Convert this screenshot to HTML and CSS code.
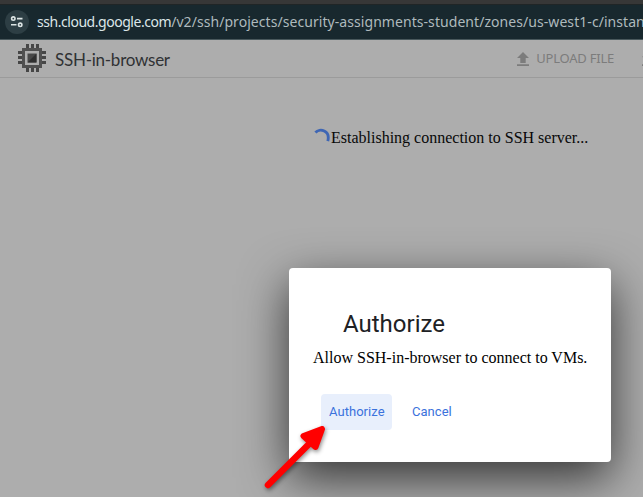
FILE: index.html
```html
<!DOCTYPE html>
<html lang="en">
<head>
<meta charset="utf-8">
<title>SSH-in-browser</title>
<link rel="stylesheet" href="styles.css">
</head>
<body>
<div class="address-bar">
  <span class="site-info"><svg width="14" height="14" viewBox="0 0 14 14" fill="none" stroke="currentColor" stroke-width="1.6"><circle cx="3.3" cy="3.6" r="1.7"/><path d="M7 3.6h5.500M1 9.800h5.500"/><circle cx="10.2" cy="9.8" r="1.7"/></svg></span>
  <span class="url"><span class="host">ssh.cloud.google.com</span><span class="path">/v2/ssh/projects/security-assignments-student/zones/us-west1-c/instan</span></span>
</div>
<header class="toolbar">
  <svg class="chip" width="28" height="28" viewBox="0 0 28 28">
    <path fill="#464646" d="M8 0h3v4H8zM13 0h3v4h-3zM18 0h3v4h-3zM8 24h3v4H8zM13 24h3v4h-3zM18 24h3v4h-3zM0 7h4v3H0zM0 12h4v3H0zM0 17h4v3H0zM24 7h4v3h-4zM24 12h4v3h-4zM24 17h4v3h-4z"/>
    <path fill="#505050" fill-rule="evenodd" d="M4 4h20v20H4zM7 7v14h14V7z"/>
    <path fill="#484848" d="M9.500 9.500h9v9h-9z"/><path fill="#303030" d="M18.500 9.500v9h-9z"/>
  </svg>
  <h1 class="brand">SSH-in-browser</h1>
  <div class="upload"><svg width="12" height="14" viewBox="0 0 12 14"><path fill="currentColor" d="M6 0l6 6H8.700v5H3.300V6H0zM0 12.300h12V14H0z"/></svg><span>UPLOAD FILE</span></div>
  <svg class="download" width="12" height="14" viewBox="0 0 12 14"><path fill="currentColor" d="M6 10L0 4.500h3.300V0h5.400v4.500H12zM0 12.300h12V14H0z"/></svg>
</header>
<main class="terminal">
  <div class="status"><svg width="18" height="20" viewBox="0 0 18 20"><path d="M1.500 4.200C6-.8 17.500 2 14.600 13.200" fill="none" stroke="#3e66b4" stroke-width="3"/></svg><span>Establishing connection to SSH server...</span></div>
</main>
<section class="dialog" role="dialog">
  <h2>Authorize</h2>
  <p>Allow SSH-in-browser to connect to VMs.</p>
  <div class="actions"><button class="primary">Authorize</button><button>Cancel</button></div>
</section>
<svg class="pointer" width="76" height="76" viewBox="0 0 76 76"><path d="M12 68L55 25" stroke="#f00" stroke-width="6.500" stroke-linecap="round"/><path d="M66 12L59.500 30L47.500 19z" fill="#f00" stroke="#f00" stroke-width="6" stroke-linejoin="round"/></svg>
</body>
</html>
```
FILE: styles.css
```css
* { box-sizing: border-box; }
body { margin: 0; width: 643px; height: 497px; overflow: hidden; position: relative; background: #adadad; font-family: "Liberation Serif", serif; }
.address-bar { height: 40px; display: flex; align-items: center; padding: 4px 0 0 5px; border-top: 4px solid #373737; border-bottom: 1px solid #49585c; background: #18282e; box-shadow: inset 0 1px #202526; }
.site-info { width: 24px; height: 24px; flex: none; border-radius: 50%; background: #2d3e44; color: #dce4e4; display: flex; align-items: center; justify-content: center; margin-top: -3px; }
.url { margin-left: 8px; margin-top: -4px; font: 14px "Noto Sans", sans-serif; white-space: nowrap; color: #aebabd; }
.host { color: #dce6e8; letter-spacing: -.46px; }
.path { letter-spacing: .06px; }
.toolbar { height: 38px; display: flex; align-items: center; padding-left: 18px; border-bottom: 1px solid #9b9b9b; }
.chip { flex: none; margin-top: -1px; }
.brand { margin: 2px 0 0 9px; font: 17px Lato, sans-serif; letter-spacing: -.25px; color: #303234; white-space: nowrap; }
.upload { margin-left: auto; display: flex; align-items: center; gap: 7px; color: #7c7c7c; font: 13px "Noto Sans", sans-serif; letter-spacing: -.22px; white-space: nowrap; }
.upload span { margin-top: -1px; }
.download { flex: none; margin-left: 28px; margin-right: -11px; color: #7c7c7c; }
.terminal { padding: 50px 0 0 314px; }
.status { display: flex; align-items: center; height: 20px; font-size: 16px; white-space: nowrap; color: #080808; }
.status svg { width: 17px; flex: none; }
.dialog { position: absolute; left: 289px; top: 268px; width: 322px; height: 194px; padding: 40px 24px 0; border-radius: 4px; background: #fff; box-shadow: 0 16px 48px rgba(0,0,0,.7); }
.dialog h2 { margin: 0 0 0 30px; font: 24px/32px Roboto, sans-serif; color: #202124; }
.dialog p { margin: 8px 0 0; font-size: 16px; line-height: 20px; white-space: nowrap; color: #000; }
.actions { display: flex; gap: 12px; margin: 26px 0 0 8px; }
.actions button { height: 36px; border: 0; border-radius: 4px; padding: 0 8px 2px; background: none; color: #3b72dc; font: 400 13px Roboto, sans-serif; letter-spacing: .04px; white-space: nowrap; }
.actions .primary { width: 71px; background: #e8effc; }
.pointer { position: absolute; left: 256px; top: 417px; fill: none; filter: drop-shadow(1px 2px 2px rgba(0,0,0,.45)); }
```
